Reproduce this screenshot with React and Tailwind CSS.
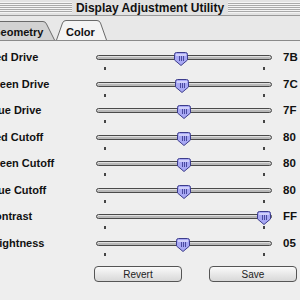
const rows = [
  { label: "Red Drive", value: "7B", pos: 181 },
  { label: "Green Drive", value: "7C", pos: 182 },
  { label: "Blue Drive", value: "7F", pos: 184 },
  { label: "Red Cutoff", value: "80", pos: 184 },
  { label: "Green Cutoff", value: "80", pos: 184 },
  { label: "Blue Cutoff", value: "80", pos: 184 },
  { label: "Contrast", value: "FF", pos: 264 },
  { label: "Brightness", value: "05", pos: 183 },
];

const font = "font-['Liberation_Sans',Arial,sans-serif]";

function Stripes() {
  return (
    <div className="flex-1 h-[11px] bg-[repeating-linear-gradient(to_bottom,#f4f4f4_0px,#f4f4f4_1px,#a9a9a9_1px,#a9a9a9_2px)]" />
  );
}

function Thumb({ pos }) {
  return (
    <svg
      className="absolute top-[5px]"
      style={{ left: pos - 96 - 7 }}
      width="14"
      height="14"
      viewBox="0 0 14 14"
    >
      <path
        d="M2.5 0.5 H11.5 Q13.5 0.5 13.5 2.5 V8 L7 13.5 L0.5 8 V2.5 Q0.5 0.5 2.5 0.5 Z"
        fill="#a8a8f4"
        stroke="#3c3c8c"
      />
      <path d="M2 2 H12 V4 H2 Z" fill="#d0d0fa" />
      <rect x="5" y="4" width="1" height="5" fill="#4a4aa0" />
      <rect x="7" y="4" width="1" height="5" fill="#4a4aa0" />
      <rect x="9" y="4" width="1" height="5" fill="#4a4aa0" />
    </svg>
  );
}

function Slider({ pos }) {
  return (
    <div className="w-[176px] relative">
      <div className="mt-[8px] h-[5px] rounded-full border border-[#4a4a4a] bg-[#b8b8b8] shadow-[inset_0_1px_0_#e0e0e0]" />
      <div className="flex justify-between pl-[8px] pr-[7px] mt-[7px]">
        <div className="w-[2px] h-[3px] bg-[#444]" />
        <div className="w-[2px] h-[3px] bg-[#444]" />
      </div>
      <Thumb pos={pos} />
    </div>
  );
}

function Button({ children, className }) {
  return (
    <div
      className={`h-[16px] rounded-[4px] border border-[#555] bg-gradient-to-b from-[#fafafa] to-[#d8d8d8] flex items-center justify-center text-[10px] text-[#222] ${className}`}
    >
      {children}
    </div>
  );
}

export default function App() {
  return (
    <div className={`w-[300px] h-[300px] overflow-hidden bg-[#eeeeee] ${font}`}>
      {/* title bar */}
      <div className="h-[16px] flex items-center bg-[#e2e2e2] border-b border-[#9a9a9a]">
        <Stripes />
        <div className="px-[4px] text-[12px] font-bold text-[#111] leading-none">
          Display Adjustment Utility
        </div>
        <Stripes />
      </div>

      {/* tabs */}
      <div className="h-[25px] flex items-end bg-[#e8e8e8] border-b border-[#8a8a8a]">
        <div className="relative ml-[-16px] w-[71px] h-[19px]">
          <svg className="absolute inset-0" width="71" height="19" viewBox="0 0 71 19">
            <path
              d="M0.5 19 V3 Q0.5 0.5 3 0.5 H59 Q61.5 0.5 62.5 3 L70.5 19"
              fill="#d2d2d2"
              stroke="#6a6a6a"
            />
          </svg>
          <div className="relative pl-[8px] pt-[3px] text-[11px] font-bold text-[#111]">Geometry</div>
        </div>
        <div className="relative ml-[1px] w-[51px] h-[20px]">
          <svg className="absolute inset-0" width="51" height="20" viewBox="0 0 51 20">
            <path
              d="M0.5 20 L6.5 3 Q7.5 0.5 10 0.5 H41 Q43.5 0.5 44.5 3 L50.5 20"
              fill="#f4f4f4"
              stroke="#6a6a6a"
            />
          </svg>
          <div className="relative pl-[10px] pt-[4px] text-[11px] font-bold text-[#111]">Color</div>
        </div>
      </div>

      {/* sliders */}
      <div className="pt-[6px]">
        {rows.map((r) => (
          <div key={r.label} className="h-[26.5px] flex">
            <div className="ml-[-13px] w-[109px] leading-[20px] text-[11px] font-bold text-[#111] whitespace-nowrap">
              {r.label}
            </div>
            <Slider pos={r.pos} />
            <div className="ml-[11px] leading-[20px] text-[11.5px] font-bold text-[#111]">{r.value}</div>
          </div>
        ))}
      </div>

      {/* buttons */}
      <div className="flex mt-[7px]">
        <Button className="ml-[94px] w-[88px]">Revert</Button>
        <Button className="ml-[27px] w-[88px]">Save</Button>
      </div>
    </div>
  );
}
